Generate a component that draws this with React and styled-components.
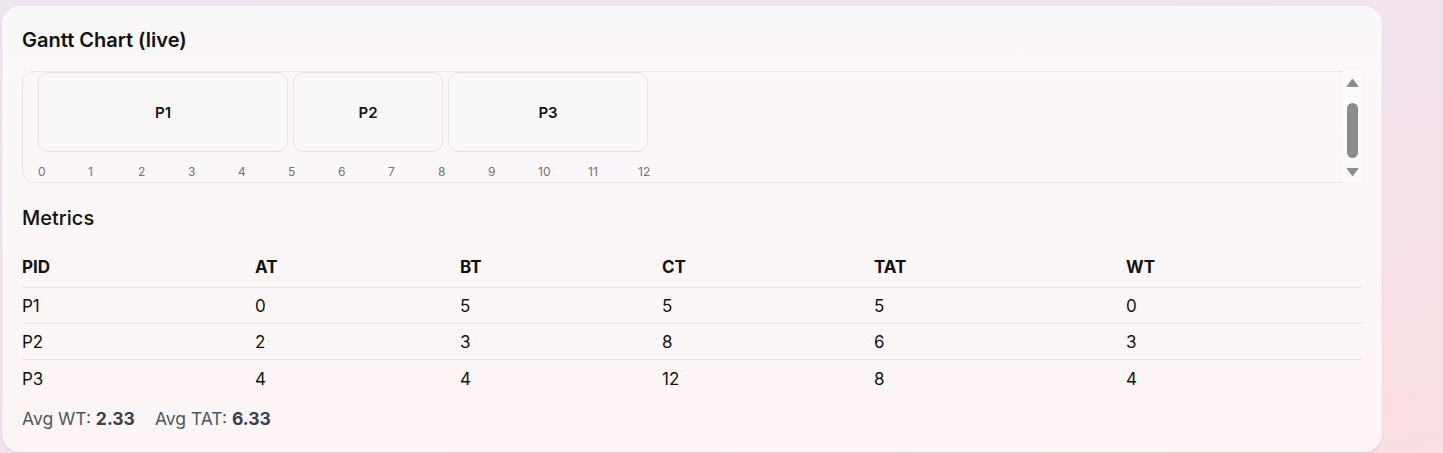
import React from 'react';
import styled, { createGlobalStyle } from 'styled-components';

const GlobalStyle = createGlobalStyle`
  html, body {
    margin: 0;
    padding: 0;
  }
  body {
    font-family: Inter, "Noto Sans", sans-serif;
    background: linear-gradient(165deg, #eee5f0 0%, #f3e3ec 55%, #fbdfe2 100%);
    min-height: 100vh;
    color: #111;
  }
`;

const Page = styled.div`
  padding: 6px 0 2px 2px;
`;

const Card = styled.section`
  width: 1380px;
  box-sizing: border-box;
  padding: 20px 20px 21px 20px;
  border-radius: 18px;
  background: linear-gradient(180deg, #faf7fa 0%, #fdf5f6 100%);
  box-shadow: 0 1px 3px rgba(120, 80, 100, 0.12), 0 1px 2px rgba(120, 80, 100, 0.06);
`;

const Title = styled.h2`
  margin: 0 0 17px;
  font-size: 20px;
  line-height: 28px;
  font-weight: 600;
  color: #111;
`;

const GanttBox = styled.div`
  display: flex;
  height: 112px;
  box-sizing: border-box;
  border: 1px solid #e6e3e8;
  border-radius: 12px;
`;

const GanttContent = styled.div`
  flex: 1;
  padding: 0 0 0 15px;
  display: flex;
  flex-direction: column;
`;

const BarRow = styled.div`
  display: flex;
  gap: 5px;
`;

const Bar = styled.div`
  width: ${p => p.$units * 50}px;
  height: 80px;
  box-sizing: border-box;
  border: 1px solid #e6e2e6;
  border-radius: 10px;
  background: #faf7f9;
  display: flex;
  align-items: center;
  justify-content: center;
  font-size: 15px;
  font-weight: 600;
  color: #111;
`;

const TickRow = styled.div`
  display: flex;
  margin-top: 12px;
`;

const Tick = styled.span`
  width: 50px;
  font-size: 12px;
  line-height: 16px;
  color: #71717a;
`;

const ScrollTrack = styled.div`
  width: 19px;
  margin: -1px -1px -1px 0;
  background: #fcfafc;
  display: flex;
  flex-direction: column;
  align-items: center;
  padding: 7px 0 6px;
`;

const Thumb = styled.div`
  width: 11px;
  height: 56px;
  border-radius: 6px;
  background: #8c8c8c;
  margin: 15px 0 9px;
`;

const Arrow = ({ down }) => (
  <svg width="13" height="10" viewBox="0 0 13 10">
    <path
      d={down ? 'M1 1.5 L12 1.5 L6.5 9 Z' : 'M1 8.5 L12 8.5 L6.5 1 Z'}
      fill="#8c8c8c"
      stroke="#8c8c8c"
      strokeWidth="1"
      strokeLinejoin="round"
    />
  </svg>
);

const SectionTitle = styled.h3`
  margin: 21px 0 14px;
  font-size: 20px;
  line-height: 28px;
  font-weight: 500;
  color: #111;
`;

const Row = styled.div`
  display: grid;
  grid-template-columns: 233px 205px 202px 212px 252px 1fr;
  align-items: center;
  height: ${p => (p.$head ? 42 : 36)}px;
  padding-top: ${p => (p.$head ? 0 : 1)}px;
  border-bottom: ${p => (p.$last ? 'none' : '1px solid #e3e4ea')};
  box-sizing: border-box;
  font-size: 17px;
  font-weight: ${p => (p.$head ? 700 : 400)};
  color: #111;
`;

const Summary = styled.div`
  margin-top: 11px;
  font-size: 17.5px;
  line-height: 24px;
  color: #4b5563;
  display: flex;
  gap: 20px;
`;

const Value = styled.b`
  font-weight: 700;
  color: #374151;
`;

const bars = [
  { id: 'P1', units: 5 },
  { id: 'P2', units: 3 },
  { id: 'P3', units: 4 },
];

const rows = [
  ['P1', 0, 5, 5, 5, 0],
  ['P2', 2, 3, 8, 6, 3],
  ['P3', 4, 4, 12, 8, 4],
];

export default function App() {
  return (
    <>
      <GlobalStyle />
      <Page>
        <Card>
          <Title>Gantt Chart (live)</Title>
          <GanttBox>
            <GanttContent>
              <BarRow>
                {bars.map(b => (
                  <Bar key={b.id} $units={b.units}>{b.id}</Bar>
                ))}
              </BarRow>
              <TickRow>
                {Array.from({ length: 13 }, (_, i) => (
                  <Tick key={i}>{i}</Tick>
                ))}
              </TickRow>
            </GanttContent>
            <ScrollTrack>
              <Arrow />
              <Thumb />
              <Arrow down />
            </ScrollTrack>
          </GanttBox>

          <SectionTitle>Metrics</SectionTitle>
          <Row $head>
            {['PID', 'AT', 'BT', 'CT', 'TAT', 'WT'].map(h => (
              <span key={h}>{h}</span>
            ))}
          </Row>
          {rows.map((r, i) => (
            <Row key={r[0]} $last={i === rows.length - 1}>
              {r.map((c, j) => (
                <span key={j}>{c}</span>
              ))}
            </Row>
          ))}
          <Summary>
            <span>Avg WT: <Value>2.33</Value></span>
            <span>Avg TAT: <Value>6.33</Value></span>
          </Summary>
        </Card>
      </Page>
    </>
  );
}
